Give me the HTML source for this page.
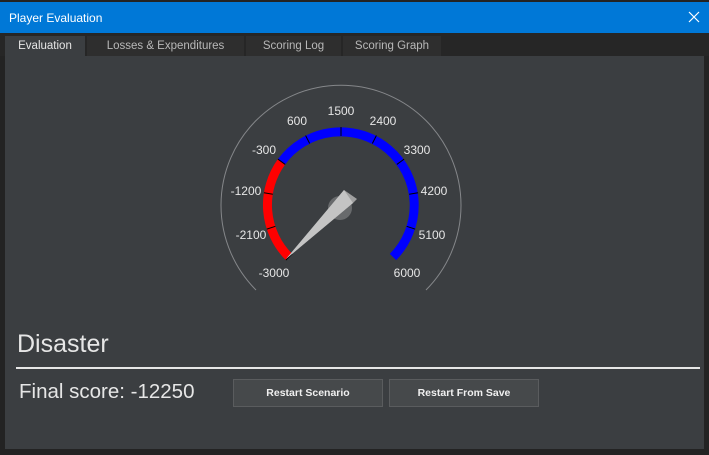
<!DOCTYPE html>
<html><head><meta charset="utf-8"><style>
html,body{margin:0;padding:0;}
body{width:709px;height:455px;background:#232323;position:relative;overflow:hidden;font-family:"Liberation Sans",sans-serif;}
.title{position:absolute;left:0;top:2px;width:709px;height:31px;background:#0078d7;color:#fff;}
.title span{position:absolute;left:9px;top:9px;font-size:12px;}
.tabs{position:absolute;left:0;top:33px;width:709px;height:23px;background:#262626;}
.tab{position:absolute;top:3px;height:20px;background:#2e2e2e;color:#b8b8b8;font-size:11.5px;line-height:20px;text-align:center;}
.tab.a{background:#3b3e41;color:#e6e6e6;}
.panel{position:absolute;left:5px;top:56px;width:699px;height:393px;background:#3b3e41;}
.dis{position:absolute;left:17px;top:330px;font-size:25px;color:#e6e6e6;}
.line{position:absolute;left:16px;top:367px;width:684px;height:2px;background:#e6e6e6;}
.fs{position:absolute;left:19px;top:380px;font-size:20.5px;color:#e6e6e6;}
.btn{position:absolute;top:379px;width:148px;height:26px;border:1px solid #5a5c5e;background:#46494b;color:#f0f0f0;font-size:10.5px;font-weight:bold;text-align:center;line-height:26px;}
</style></head><body>
<div class="title"><span>Player Evaluation</span>
<svg style="position:absolute;left:688px;top:9px" width="12" height="12"><path d="M1,1 L11,11 M11,1 L1,11" stroke="#fff" stroke-width="1.2"/></svg></div>
<div class="tabs">
<div class="tab a" style="left:5px;width:80px;">Evaluation</div>
<div class="tab" style="left:87px;width:157px;">Losses &amp; Expenditures</div>
<div class="tab" style="left:246px;width:95px;">Scoring Log</div>
<div class="tab" style="left:343px;width:98px;">Scoring Graph</div>
</div>
<div class="panel"></div>
<svg style="position:absolute;left:0;top:0" width="709" height="455">
<path d="M256,290 A120,120 0 1 1 426,290" fill="none" stroke="#85878a" stroke-width="1"/>
<path d="M289,257 A73.5,73.5 0 0 1 281.5,161.8" fill="none" stroke="#ff0000" stroke-width="9"/>
<path d="M281.5,161.8 A73.5,73.5 0 1 1 393,257" fill="none" stroke="#0000ff" stroke-width="9"/>
<g stroke="#000" stroke-width="1">
<line x1="410" y1="205" x2="419" y2="205" transform="rotate(-225 341 205)"/>
<line x1="410" y1="205" x2="419" y2="205" transform="rotate(-198 341 205)"/>
<line x1="410" y1="205" x2="419" y2="205" transform="rotate(-171 341 205)"/>
<line x1="410" y1="205" x2="419" y2="205" transform="rotate(-144 341 205)"/>
<line x1="410" y1="205" x2="419" y2="205" transform="rotate(-117 341 205)"/>
<line x1="410" y1="205" x2="419" y2="205" transform="rotate(-90 341 205)"/>
<line x1="410" y1="205" x2="419" y2="205" transform="rotate(-63 341 205)"/>
<line x1="410" y1="205" x2="419" y2="205" transform="rotate(-36 341 205)"/>
<line x1="410" y1="205" x2="419" y2="205" transform="rotate(-9 341 205)"/>
<line x1="410" y1="205" x2="419" y2="205" transform="rotate(18 341 205)"/>
</g>
<g fill="#e6e6e6" font-size="12" text-anchor="middle" font-family="Liberation Sans,sans-serif">
<text x="274" y="277">-3000</text>
<text x="251" y="239">-2100</text>
<text x="246" y="195">-1200</text>
<text x="264" y="154">-300</text>
<text x="297" y="125">600</text>
<text x="341" y="115">1500</text>
<text x="383" y="125">2400</text>
<text x="417" y="154">3300</text>
<text x="434" y="195">4200</text>
<text x="432" y="239">5100</text>
<text x="407" y="277">6000</text>
</g>
<circle cx="340" cy="208" r="12" fill="#686a6c"/>
<polygon points="286,259 344,190 357,199 353,203" fill="#a0a0a0"/>
<polygon points="286,259 344,190 353,203" fill="#c4c4c4"/>
</svg>
<div class="dis">Disaster</div>
<div class="line"></div>
<div class="fs">Final score: -12250</div>
<div class="btn" style="left:233px;">Restart Scenario</div>
<div class="btn" style="left:389px;">Restart From Save</div>
</body></html>
